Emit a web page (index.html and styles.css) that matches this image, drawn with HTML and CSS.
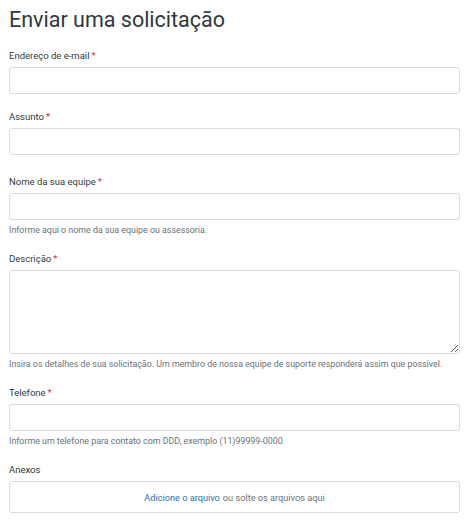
FILE: index.html
```html
<!DOCTYPE html>
<html lang="pt-BR">
<head>
<meta charset="utf-8">
<title>Enviar uma solicitação</title>
<link rel="stylesheet" href="styles.css">
</head>
<body>
<main class="page">
  <h1 class="title">Enviar uma solicitação</h1>
  <form class="form">
    <div class="field">
      <label class="label">Endereço de e-mail<span class="req">*</span></label>
      <input class="input" type="text">
    </div>
    <div class="field field-wide">
      <label class="label">Assunto<span class="req">*</span></label>
      <input class="input" type="text">
    </div>
    <div class="field">
      <label class="label">Nome da sua equipe<span class="req">*</span></label>
      <input class="input" type="text">
      <p class="hint">Informe aqui o nome da sua equipe ou assessoria.</p>
    </div>
    <div class="field">
      <label class="label">Descrição<span class="req">*</span></label>
      <textarea class="textarea"></textarea>
      <p class="hint">Insira os detalhes de sua solicitação. Um membro de nossa equipe de suporte responderá assim que possível.</p>
    </div>
    <div class="field">
      <label class="label">Telefone<span class="req">*</span></label>
      <input class="input" type="text">
      <p class="hint">Informe um telefone para contato com DDD, exemplo (11)99999-0000.</p>
    </div>
    <div class="field">
      <label class="label">Anexos</label>
      <div class="drop"><a class="drop-link" href="#">Adicione o arquivo</a> ou solte os arquivos aqui</div>
    </div>
  </form>
</main>
</body>
</html>
```
FILE: styles.css
```css
html, body {
  margin: 0;
  padding: 0;
  background: #ffffff;
}
body {
  font-family: Roboto, "Liberation Sans", sans-serif;
  color: #2f3941;
}
.page {
  padding: 6px 14px 0 9px;
}
.title {
  margin: 0 0 15px 0;
  font-size: 21.5px;
  line-height: 28px;
  font-weight: 400;
  color: #2f3941;
}
.form {
  display: flex;
  flex-direction: column;
}
.field {
  display: flex;
  flex-direction: column;
  margin-bottom: 16px;
}
.field-wide {
  margin-bottom: 20px;
}
.label {
  font-size: 9.5px;
  line-height: 14px;
  margin-bottom: 4px;
  color: #2f3941;
}
.req {
  color: #cc3340;
  margin-left: 2px;
}
.input {
  box-sizing: border-box;
  height: 27px;
  width: 100%;
  border: 1px solid #d8dcde;
  border-radius: 3px;
  margin: 0;
  padding: 0 8px;
  background: #fff;
}
.textarea {
  box-sizing: border-box;
  height: 84px;
  width: 100%;
  border: 1px solid #d8dcde;
  border-radius: 3px;
  margin: 0;
  padding: 6px 8px;
  background: #fff;
  resize: vertical;
  display: block;
}
.hint {
  margin: 5px 0 0 0;
  font-size: 8.85px;
  line-height: 11px;
  color: #68737d;
}
.drop {
  box-sizing: border-box;
  height: 32px;
  border: 1px solid #d8dcde;
  border-radius: 3px;
  display: flex;
  align-items: center;
  justify-content: center;
  font-size: 9.2px;
  color: #68737d;
}
.drop-link {
  color: #1f73b7;
  text-decoration: none;
  margin-right: 3px;
}
```
